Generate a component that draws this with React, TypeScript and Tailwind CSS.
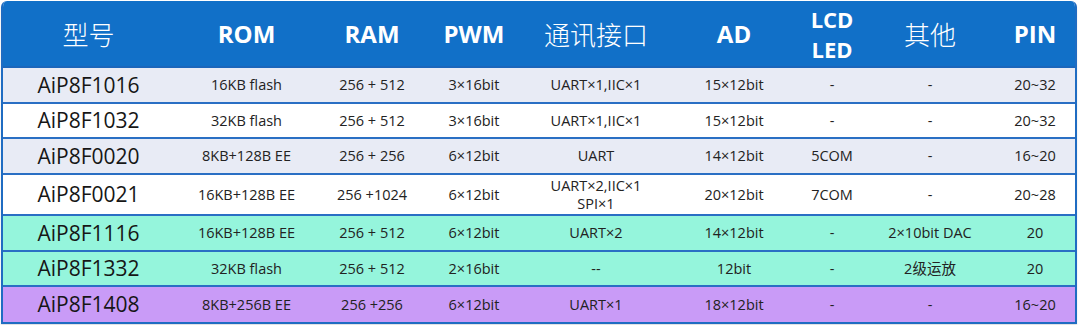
const cols = 'grid grid-cols-[171px_145px_106px_98px_146px_130px_66px_130px_80px]';

type Row = {
  model: string;
  rom: string;
  ram: string;
  pwm: string;
  io: string[];
  ad: string;
  lcd: string;
  other: string;
  pin: string;
  bg: string;
  h: string;
};

const rows: Row[] = [
  { model: 'AiP8F1016', rom: '16KB flash', ram: '256 + 512', pwm: '3×16bit', io: ['UART×1,IIC×1'], ad: '15×12bit', lcd: '-', other: '-', pin: '20~32', bg: 'bg-[#e8ebf5]', h: 'h-[36px]' },
  { model: 'AiP8F1032', rom: '32KB flash', ram: '256 + 512', pwm: '3×16bit', io: ['UART×1,IIC×1'], ad: '15×12bit', lcd: '-', other: '-', pin: '20~32', bg: 'bg-white', h: 'h-[35px]' },
  { model: 'AiP8F0020', rom: '8KB+128B EE', ram: '256 + 256', pwm: '6×12bit', io: ['UART'], ad: '14×12bit', lcd: '5COM', other: '-', pin: '16~20', bg: 'bg-[#e8ebf5]', h: 'h-[36px]' },
  { model: 'AiP8F0021', rom: '16KB+128B EE', ram: '256 +1024', pwm: '6×12bit', io: ['UART×2,IIC×1', 'SPI×1'], ad: '20×12bit', lcd: '7COM', other: '-', pin: '20~28', bg: 'bg-white', h: 'h-[41px]' },
  { model: 'AiP8F1116', rom: '16KB+128B EE', ram: '256 + 512', pwm: '6×12bit', io: ['UART×2'], ad: '14×12bit', lcd: '-', other: '2×10bit DAC', pin: '20', bg: 'bg-[#95f5dc]', h: 'h-[36px]' },
  { model: 'AiP8F1332', rom: '32KB flash', ram: '256 + 512', pwm: '2×16bit', io: ['--'], ad: '12bit', lcd: '-', other: '2级运放', pin: '20', bg: 'bg-[#95f5dc]', h: 'h-[35px]' },
  { model: 'AiP8F1408', rom: '8KB+256B EE', ram: '256 +256', pwm: '6×12bit', io: ['UART×1'], ad: '18×12bit', lcd: '-', other: '-', pin: '16~20', bg: 'bg-[#c99bf7]', h: 'h-[35px]' },
];

const Cell = ({ children }: { children: React.ReactNode }) => (
  <div className="flex flex-col items-center justify-center text-[14.5px] leading-[18px] text-[#222]">
    {children}
  </div>
);

export default function App() {
  return (
    <div className="w-[1080px] h-[325px] bg-white pt-px pl-px font-['Open_Sans','Noto_Sans_CJK_SC',sans-serif]">
      <div className="w-[1076px] border-2 border-t-0 border-[#1f6cc2] rounded-t-md overflow-hidden shadow-[0_2px_2px_rgba(0,0,0,0.12)]">
        {/* header */}
        <div className={`${cols} h-[67px] bg-[#1170c8] text-white border-b-2 border-[#1b66bb]`}>
          <div className="flex items-center justify-center text-[26px] font-['Noto_Sans_CJK_SC',serif] font-light">型号</div>
          <div className="flex items-center justify-center text-[24px] font-bold">ROM</div>
          <div className="flex items-center justify-center text-[24px] font-bold">RAM</div>
          <div className="flex items-center justify-center text-[24px] font-bold">PWM</div>
          <div className="flex items-center justify-center text-[26px] font-['Noto_Sans_CJK_SC',serif] font-light">通讯接口</div>
          <div className="flex items-center justify-center text-[24px] font-bold">AD</div>
          <div className="flex flex-col items-center justify-center text-[22px] leading-[30px] font-bold">
            <span>LCD</span>
            <span>LED</span>
          </div>
          <div className="flex items-center justify-center text-[26px] font-['Noto_Sans_CJK_SC',serif] font-light">其他</div>
          <div className="flex items-center justify-center text-[24px] font-bold">PIN</div>
        </div>

        {rows.map((r) => (
          <div key={r.model} className={`${cols} ${r.h} ${r.bg} border-b-2 border-[#2a6fc4] last:border-b-0`}>
            <div className="flex items-center justify-center pt-px text-[21px] text-[#161616]">{r.model}</div>
            <Cell>{r.rom}</Cell>
            <Cell>{r.ram}</Cell>
            <Cell>{r.pwm}</Cell>
            <Cell>
              {r.io.map((t) => (
                <span key={t}>{t}</span>
              ))}
            </Cell>
            <Cell>{r.ad}</Cell>
            <Cell>{r.lcd}</Cell>
            <Cell>{r.other}</Cell>
            <Cell>{r.pin}</Cell>
          </div>
        ))}
      </div>
    </div>
  );
}
